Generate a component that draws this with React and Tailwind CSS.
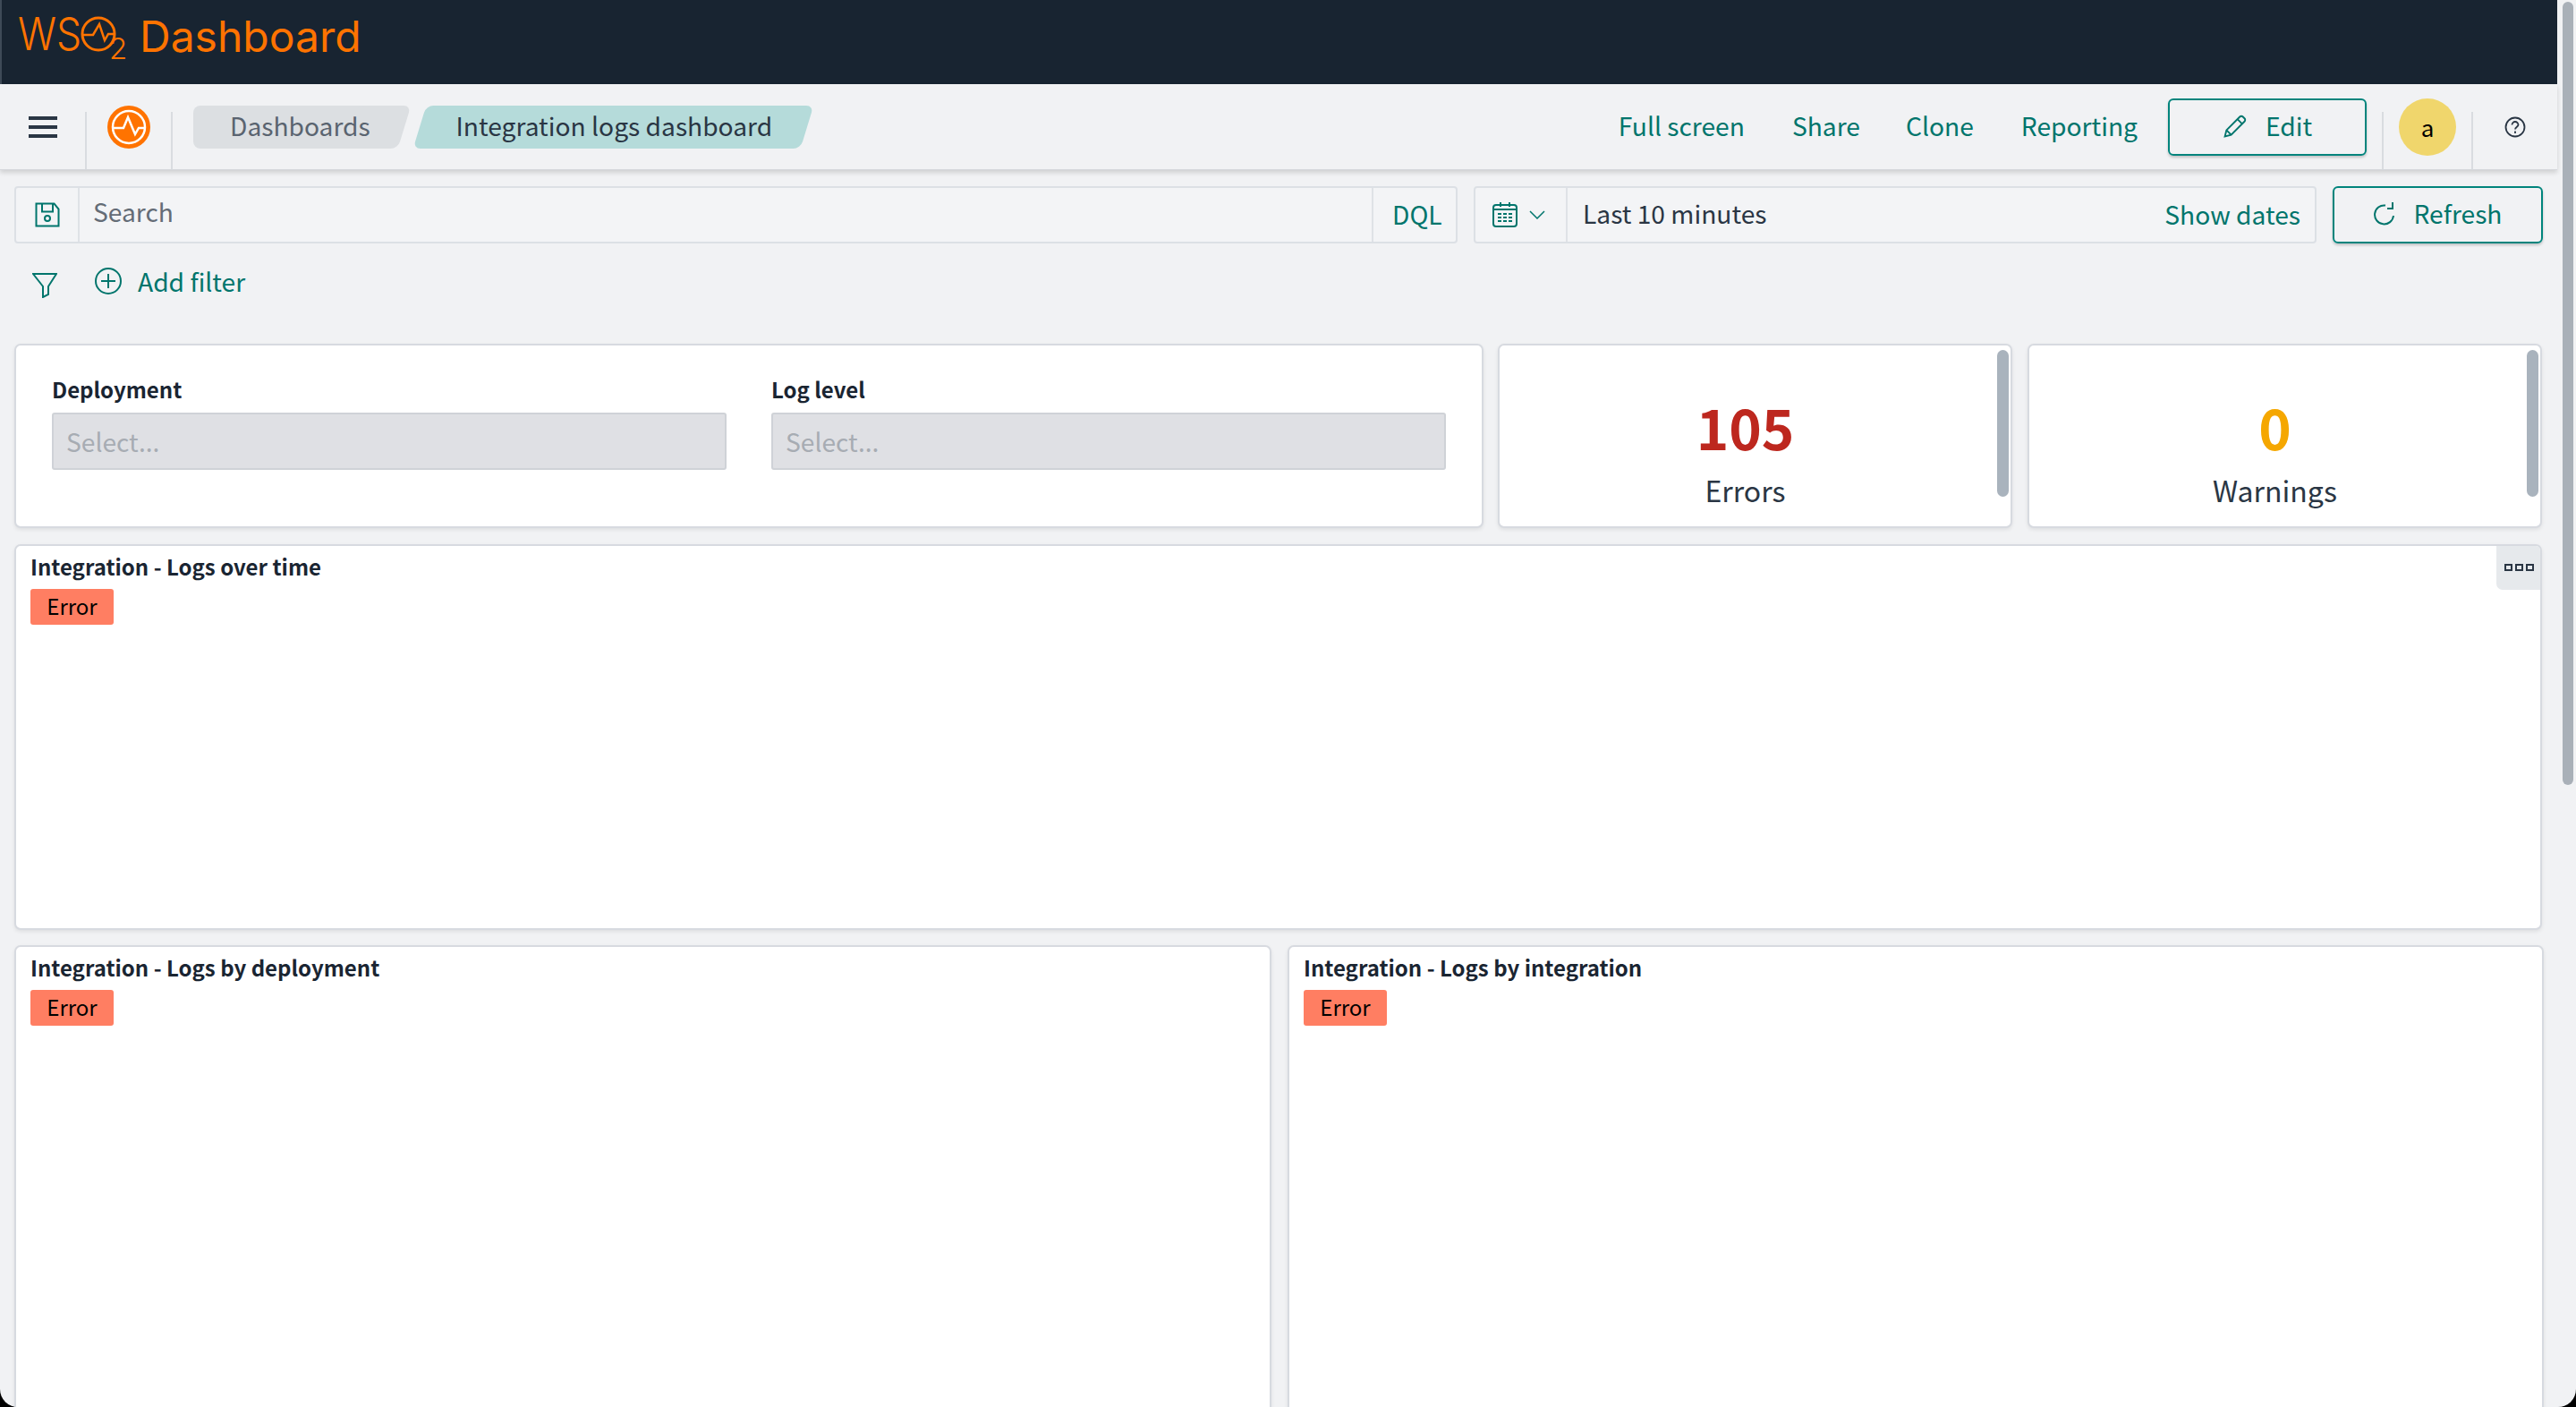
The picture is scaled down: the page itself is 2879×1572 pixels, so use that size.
const F = "font-['Noto_Sans_CJK_SC','Source_Sans_Pro',sans-serif]";

function Logo() {
  return (
    <svg width="132" height="60" viewBox="0 0 132 60" className="shrink-0 overflow-visible -mt-[2px]">
      <text x="0" y="40" fontFamily="Inter, sans-serif" fontWeight="300" fontSize="50" fill="#ff7300" textLength="71" lengthAdjust="spacingAndGlyphs">WS</text>
      <circle cx="90" cy="22" r="18" fill="none" stroke="#ff7300" strokeWidth="3" />
      <path d="M72 23h12l7-12 6 18 4-7h7" fill="none" stroke="#ff7300" strokeWidth="2.5" />
      <text x="102" y="50" fontFamily="Inter, sans-serif" fontWeight="300" fontSize="33" fill="#ff7300">2</text>
    </svg>
  );
}

function PulseIcon() {
  return (
    <svg width="48" height="48" viewBox="0 0 48 48" className="shrink-0">
      <circle cx="24" cy="24" r="24" fill="#ff7300" />
      <circle cx="24" cy="24" r="18" fill="none" stroke="#fff" strokeWidth="2.5" />
      <path d="M7 25h11l5-12 8 19 4-7h7" fill="none" stroke="#fff" strokeWidth="2.500" />
    </svg>
  );
}

function Sep() {
  return <div className="w-[2px] h-[64px] self-end bg-[#d9dce0] shrink-0" />;
}

function ErrorBadge() {
  return (
    <div className="w-[93px] h-[40px] mt-[2px] rounded-[3px] bg-[#ff7e62] text-black text-[24px] leading-[38px] text-center">Error</div>
  );
}

function Panel({ title, menu, className = "" }) {
  return (
    <div className={`relative bg-white rounded-[7px] border-2 border-[#d7dae0] shadow-[0_2px_4px_rgba(0,0,0,0.08)] px-[16px] pt-[2px] ${className}`}>
      <div className="text-[24px] leading-[42px] font-bold text-[#1a2532] h-[44px]">{title}</div>
      <ErrorBadge />
      {menu && (
        <div className="absolute right-0 top-0 w-[49px] h-[49px] bg-[#e6e9ec] rounded-bl-[7px] rounded-tr-[5px] flex items-center justify-center gap-[3px] pb-[1px] pl-[2px]">
          <span className="w-[9px] h-[8px] border-2 border-[#2a3644]" />
          <span className="w-[9px] h-[8px] border-2 border-[#2a3644]" />
          <span className="w-[9px] h-[8px] border-2 border-[#2a3644]" />
        </div>
      )}
    </div>
  );
}

function Stat({ value, label, color, className = "" }) {
  return (
    <div className={`relative bg-white rounded-[7px] border-2 border-[#d7dae0] shadow-[0_2px_4px_rgba(0,0,0,0.08)] flex flex-col items-center pr-[22px] pt-[48px] ${className}`}>
      <div className={`text-[62px] leading-[84px] font-bold ${color}`}>{value}</div>
      <div className="text-[32px] leading-[50px] text-[#2a3644] mt-[4px]">{label}</div>
      <div className="absolute right-[2px] top-[5px] w-[13px] h-[164px] rounded-full bg-[#a9b3bd]" />
    </div>
  );
}

function Select({ label }) {
  return (
    <div className="flex-1 min-w-0">
      <div className="text-[24px] leading-[36px] font-bold text-[#1a2532] h-[36px]">{label}</div>
      <div className="mt-[8px] h-[64px] rounded-[3px] border-2 border-[#cfd2d7] bg-[#dfe0e4] px-[14px] text-[28.200px] leading-[60px] text-[#a7acb3]">Select...</div>
    </div>
  );
}

export default function App() {
  return (
    <div className="w-[2879px] h-[1572px] bg-black overflow-hidden">
      <div className={`relative w-[2879px] h-[1572px] overflow-hidden rounded-b-[20px] bg-[#f1f2f4] ${F}`}>
        <div className="h-[94px] mr-[21px] bg-[#182431] flex items-center pl-[18px] gap-[4px] border-l-2 border-[#3e4a57]">
          <Logo />
          <span className="font-['Inter',sans-serif] text-[48px] leading-[56px] text-[#ff7300] -mt-[12px]">Dashboard</span>
        </div>

        <div className="mr-[21px]">
          <div className="h-[96px] flex items-start shadow-[0_3px_5px_rgba(0,0,0,0.14)] border-b border-[#d5d8dc] relative">
            <div className="w-[95px] h-full flex justify-center pt-[36px] pl-[1px]">
              <div className="w-[32px] h-[24px] flex flex-col justify-between">
                <span className="h-[4px] bg-[#2a3644]" />
                <span className="h-[4px] bg-[#2a3644]" />
                <span className="h-[4px] bg-[#2a3644]" />
              </div>
            </div>
            <Sep />
            <div className="w-[94px] h-full flex justify-center pt-[24px]"><PulseIcon /></div>
            <Sep />
            <div className="flex pt-[24px] ml-[23px] gap-[4px]">
              <div className="relative h-[48px] w-[243px] text-[28.200px] leading-[44px] text-[#5a6470] pl-[41px]">
                <span className="absolute inset-y-0 left-0 right-[30px] rounded-l-[8px] bg-[#dcdfe2]" />
                <span className="absolute inset-y-0 right-[7.500px] w-[60px] rounded-[8px] -skew-x-[17deg] bg-[#dcdfe2]" />
                <span className="relative">Dashboards</span>
              </div>
              <div className="h-[48px] w-[433px] ml-[6px] rounded-[8px] -skew-x-[17deg] bg-[#b5dbda] text-[28.200px] leading-[44px] text-[#2a3644] pl-[40px]">
                <div className="skew-x-[17deg]">Integration logs dashboard</div>
              </div>
            </div>
            <div className="flex-1" />
            <div className="flex items-center h-[60px] mt-[16px] text-[28.200px] text-[#00756c]">
              <span>Full screen</span>
              <span className="ml-[53px]">Share</span>
              <span className="ml-[51px]">Clone</span>
              <span className="ml-[53px]">Reporting</span>
            </div>
            <div className="w-[222px] h-[64px] mt-[16px] ml-[34px] pb-[3px] rounded-[6px] border-2 border-[#00847c] shadow-[0_2px_3px_rgba(0,0,0,0.2)] flex items-center justify-center gap-[20px] text-[28.200px] text-[#00756c]">
              <svg width="28" height="28" viewBox="0 0 16 16" fill="none" stroke="#00756c" strokeWidth="1.100">
                <path d="M1.500 14.500l1-4L11 2a1.400 1.400 0 012 0l1 1a1.400 1.400 0 010 2l-8.500 8.500zM2.500 10.500l3 3M9.500 3.500l3 3" />
              </svg>
              <span>Edit</span>
            </div>
            <div className="ml-[17px] self-end"><Sep /></div>
            <div className="w-[98px] h-full flex justify-center pt-[16px]">
              <div className="w-[64px] h-[64px] rounded-full bg-[#f0d66c] text-black text-[26px] flex items-center justify-center pb-[2px]">a</div>
            </div>
            <div className="self-end"><Sep /></div>
            <div className="w-[94px] h-full flex justify-center pt-[36px]">
              <svg width="24" height="24" viewBox="0 0 24 24" fill="none" stroke="#2a3644" strokeWidth="1.800">
                <circle cx="12" cy="12" r="10.500" />
                <path d="M8.500 9.500a3.500 3.500 0 117 0c0 2-3.500 2.500-3.500 5" />
                <path d="M12 16.500v2.500" />
              </svg>
            </div>
          </div>

          <div className="flex mt-[18px] ml-[16px] mr-[17px] h-[64px] gap-[18px]">
            <div className="w-[1613px] flex items-stretch rounded-[4px] border-2 border-[#dce0e5] bg-[#f3f4f6] shrink-0">
              <div className="w-[71px] flex items-center justify-center border-r-2 border-[#dfe2e6]">
                <svg width="28" height="28" viewBox="0 0 28 28" fill="none" stroke="#00756c" strokeWidth="2">
                  <path d="M1.500 1.500h20l5 6v19h-25z" />
                  <path d="M8 1.500v9h12v-9" />
                  <circle cx="14" cy="18" r="3" />
                </svg>
              </div>
              <div className="flex-1 pl-[15px] text-[28.200px] leading-[52px] text-[#646c76]">Search</div>
              <div className="w-[94px] border-l-2 border-[#dfe2e6] pl-[21px] text-[28.200px] leading-[58px] text-[#00756c]">DQL</div>
            </div>
            <div className="w-[942px] flex items-stretch rounded-[4px] border-2 border-[#dce0e5] bg-[#f3f4f6] shrink-0">
              <div className="w-[103px] flex items-center pl-[19px] gap-[13px] border-r-2 border-[#dfe2e6]">
                <svg width="28" height="28" viewBox="0 0 28 28" fill="none" stroke="#00756c" strokeWidth="2">
                  <rect x="1" y="3" width="26" height="24" rx="3" />
                  <path d="M1 8h26M9 0v5M19 0v5" />
                  <path d="M6 13h4M12 13h4M18 13h4M6 17h4M12 17h4M18 17h4M6 21h4M12 21h4M18 21h4" />
                </svg>
                <svg width="18" height="10" viewBox="0 0 18 10" fill="none" stroke="#00756c" strokeWidth="1.500"><path d="M1 1l8 8 8-8" /></svg>
              </div>
              <div className="flex-1 pl-[17px] text-[28.200px] leading-[56px] text-[#2a3644]">Last 10 minutes</div>
              <div className="pr-[16px] text-[28.200px] leading-[58px] text-[#00756c]">Show dates</div>
            </div>
            <div className="w-[235px] shrink-0 rounded-[6px] border-2 border-[#00847c] shadow-[0_2px_3px_rgba(0,0,0,0.2)] flex items-center justify-center gap-[21px] pb-[3px] text-[28.200px] text-[#00756c]">
              <svg width="24" height="26" viewBox="0 0 24 26" fill="none" stroke="#00756c" strokeWidth="2">
                <path d="M13 3.500A10.500 10.500 0 1022 15" />
                <path d="M21 0v7h-6" />
              </svg>
              <span>Refresh</span>
            </div>
          </div>

          <div className="flex items-center h-[40px] mt-[22px] ml-[36px]">
            <svg width="28" height="28" viewBox="0 0 28 28" fill="none" stroke="#00756c" strokeWidth="2" className="mt-[9px]">
              <path d="M1 1h26L18 15v9l-6 3V15z" />
            </svg>
            <svg width="30" height="30" viewBox="0 0 30 30" fill="none" stroke="#00756c" strokeWidth="2" className="ml-[42px] -mt-[1px]">
              <circle cx="15" cy="15" r="14" />
              <path d="M15 7v16M7 15h16" />
            </svg>
            <span className="ml-[18px] text-[28.200px] text-[#00756c]">Add filter</span>
          </div>

          <div className="ml-[16px] mr-[17px] mt-[50px] flex flex-col gap-[18px]">
            <div className="flex h-[206px]">
              <div className="w-[1642px] shrink-0 bg-white rounded-[7px] border-2 border-[#d7dae0] shadow-[0_2px_4px_rgba(0,0,0,0.08)] flex gap-[50px] pl-[40px] pr-[40px] pt-[31px]">
                <Select label="Deployment" />
                <Select label="Log level" />
              </div>
              <Stat value="105" label="Errors" color="text-[#bd271e]" className="w-[575px] ml-[16px] shrink-0" />
              <Stat value="0" label="Warnings" color="text-[#f5a700]" className="w-[575px] ml-[17px] shrink-0" />
            </div>
            <Panel title="Integration - Logs over time" menu className="h-[431px]" />
            <div className="flex gap-[18px] h-[540px] -mt-[1px]">
              <Panel title="Integration - Logs by deployment" className="w-[1405px] shrink-0" />
              <Panel title="Integration - Logs by integration" className="w-[1404px] shrink-0" />
            </div>
          </div>
        </div>

        <div className="absolute right-[3px] top-[2px] w-[12px] h-[875px] rounded-full bg-[#a9b0b8]" />
      </div>
    </div>
  );
}
